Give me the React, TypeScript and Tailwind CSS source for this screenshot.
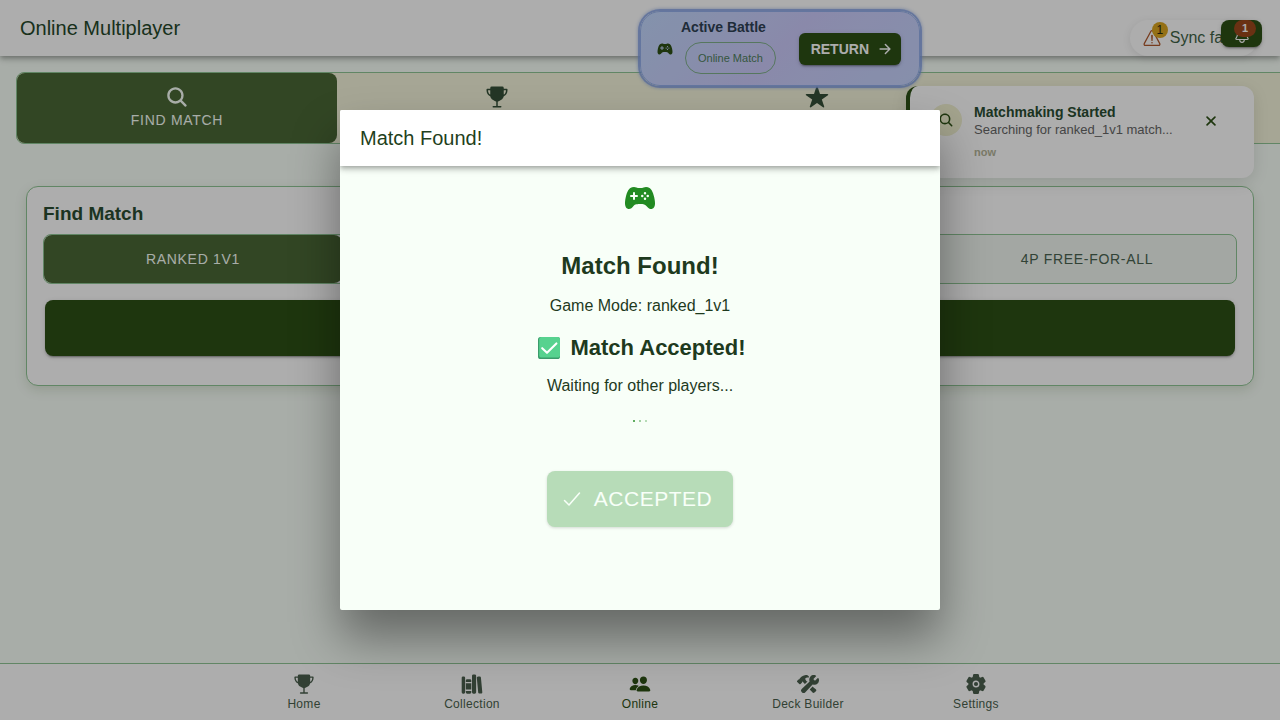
import type { ReactNode } from 'react';
import type { IconType } from 'react-icons';
import {
  IoArrowForward,
  IoCheckmark,
  IoClose,
  IoConstruct,
  IoGameController,
  IoLibrary,
  IoNotificationsOutline,
  IoPeople,
  IoPulse,
  IoSearch,
  IoSettings,
  IoStar,
  IoTrophy,
  IoWarningOutline,
} from 'react-icons/io5';

const TOOLBAR_SHADOW =
  'shadow-[0_2px_4px_-1px_rgba(0,0,0,0.2),0_4px_5px_0_rgba(0,0,0,0.14),0_1px_10px_0_rgba(0,0,0,0.12)]';
const BUTTON_SHADOW =
  'shadow-[0_3px_1px_-2px_rgba(0,0,0,0.2),0_2px_2px_0_rgba(0,0,0,0.14),0_1px_5px_0_rgba(0,0,0,0.12)]';

function Toolbar({ title, children }: { title: ReactNode; children?: ReactNode }) {
  return (
    <header className={`relative z-10 flex h-14 shrink-0 items-center justify-between bg-white px-5 ${TOOLBAR_SHADOW}`}>
      {title}
      {children}
    </header>
  );
}

const sections: { name: string; icon: IconType; caption?: string }[] = [
  { name: 'Find match', icon: IoSearch, caption: 'FIND MATCH' },
  { name: 'Tournaments', icon: IoTrophy },
  { name: 'Leaderboard', icon: IoStar },
  { name: 'Activity', icon: IoPulse },
];

function SectionTabs() {
  return (
    <nav className="ml-4 flex rounded-lg border border-[#90c695] bg-[#f5f5dc]" aria-label="Sections">
      {sections.map(({ name, icon: Icon, caption }, i) => (
        <button
          key={name}
          aria-label={name}
          className={`flex h-[70px] min-w-80 flex-col items-center justify-center gap-px pb-0.5 text-sm leading-5 font-medium tracking-wider ${
            i === 0 ? 'rounded-lg bg-[#4a6736] text-[#f8fff8]' : 'text-[#355038]'
          }`}
        >
          <Icon className="size-6" />
          <span className="h-5">{caption}</span>
        </button>
      ))}
    </nav>
  );
}

const modes = [
  { name: 'Ranked 1v1', caption: 'RANKED 1V1' },
  { name: 'Casual 1v1' },
  { name: 'Team 2v2' },
  { name: '4P Free-for-all', caption: '4P FREE-FOR-ALL' },
];

function FindMatchCard() {
  return (
    <section className="mx-[26px] mt-[42px] rounded-xl border border-[#90c695] bg-white px-4 pt-[15px] pb-[29px] shadow-[0_4px_12px_rgba(45,80,22,0.15)]">
      <h2 className="text-[19px] leading-6 font-bold text-[#2a4d32]">Find Match</h2>
      <div className="mt-2 grid grid-cols-4 rounded-lg border border-[#90c695] bg-[#f0f7f0]">
        {modes.map(({ name, caption }, i) => (
          <button
            key={name}
            aria-label={name}
            className={`h-12 text-sm font-medium tracking-wider ${
              i === 0 ? 'rounded-lg bg-[#4a6736] text-[#f8fff8]' : 'text-[#4a6350]'
            }`}
          >
            {caption}
          </button>
        ))}
      </div>
      <div className="px-0.5 pt-4">
        <button aria-label="Search" className={`block h-14 w-full rounded-lg bg-[#2d5016] ${BUTTON_SHADOW}`} />
      </div>
    </section>
  );
}

const tabs: { label: string; icon: IconType }[] = [
  { label: 'Home', icon: IoTrophy },
  { label: 'Collection', icon: IoLibrary },
  { label: 'Online', icon: IoPeople },
  { label: 'Deck Builder', icon: IoConstruct },
  { label: 'Settings', icon: IoSettings },
];

function TabBar() {
  return (
    <nav className="flex h-[57px] shrink-0 justify-center border-t border-[#90c695] bg-white" aria-label="Main">
      {tabs.map(({ label, icon: Icon }) => (
        <a
          key={label}
          href="#"
          className={`flex w-[168px] flex-col items-center justify-center gap-px text-xs leading-4 tracking-wide ${
            label === 'Online' ? 'text-[#2d5016]' : 'text-[#4a5f4d]'
          }`}
        >
          <Icon className="size-[22px]" />
          {label}
        </a>
      ))}
    </nav>
  );
}

function HeaderStatus() {
  return (
    <div className="absolute top-5 right-[18px] pr-1">
      <div className="flex h-9 items-center gap-2 rounded-full bg-white pr-2.5 pl-3 text-base text-[#3f6347] shadow-[0_2px_8px_rgba(0,0,0,0.1)]">
        <span className="relative">
          <IoWarningOutline className="size-5 text-[#b0592d]" />
          <span className="absolute -top-1.5 left-2.5 flex size-4 items-center justify-center rounded-full bg-[#daa520] text-xs text-[#2a2a10]">
            1
          </span>
        </span>
        Sync failed
      </div>
      <button
        aria-label="Notifications"
        className={`absolute top-0 right-0 flex h-[27px] w-[41px] items-center justify-center rounded-lg bg-[#2d5016] pt-0.5 text-white ${BUTTON_SHADOW}`}
      >
        <IoNotificationsOutline className="size-[18px]" />
        <span className="absolute top-0 left-[13px] flex h-[17px] w-[22px] items-center justify-center rounded-full bg-[#9c491d] text-[11px] font-bold text-white">
          1
        </span>
      </button>
    </div>
  );
}

function ActiveBattle() {
  return (
    <aside className="absolute top-[11px] left-1/2 z-20 flex h-[75px] w-[280px] items-center rounded-[20px] border border-[#94afea] bg-linear-135 from-[#c2d8fe] via-[#cccbfb] to-[#c6d4fd] pr-[18px] pl-4 shadow-[0_0_0_2px_rgba(125,155,225,0.7),0_0_3px_3px_rgba(125,155,225,0.4)]">
      <IoGameController className="size-4 text-[#2d5016]" />
      <div className="ml-2 flex flex-1 flex-col items-start pb-1.5">
        <strong className="text-sm leading-5 text-[#2f4155]">Active Battle</strong>
        <span className="mt-[5px] ml-1 flex h-8 items-center rounded-full border border-[#7fb08b] px-3 text-[11px] text-[#4f805c]">
          Online Match
        </span>
      </div>
      <button
        className={`flex h-8 items-center gap-2 rounded-md bg-[#2d5016] pr-2 pl-3 text-sm font-bold text-white ${BUTTON_SHADOW}`}
      >
        RETURN
        <IoArrowForward className="size-4" />
      </button>
    </aside>
  );
}

function Toast() {
  return (
    <div
      role="status"
      className="absolute top-[86px] right-[26px] z-20 flex h-[92px] w-[348px] items-start rounded-xl border-l-4 border-[#2d5016] bg-white pt-4 pr-[34px] pl-5 shadow-[0_4px_16px_rgba(0,0,0,0.12)]"
    >
      <span className="mt-0.5 flex size-8 items-center justify-center rounded-full bg-[#f0f0d0] text-[#2d5016]">
        <IoSearch className="size-4" />
      </span>
      <div className="ml-3 flex-1">
        <h3 className="text-sm leading-5 font-bold text-[#2a4d32]">Matchmaking Started</h3>
        <p className="text-[13px] leading-4 text-[#666666]">Searching for ranked_1v1 match...</p>
        <p className="mt-2 text-[11px] leading-3 font-bold text-[#b4b498]">now</p>
      </div>
      <button aria-label="Dismiss" className="mt-2.5 text-[#2d5016]">
        <IoClose className="size-[18px]" />
      </button>
    </div>
  );
}

function AcceptedMark() {
  return (
    <svg className="size-[22px]" viewBox="0 0 22 22" fill="none" aria-hidden="true">
      <rect width="22" height="22" rx="2.6" fill="#3b9c6b" />
      <rect x="1.2" width="20.8" height="20.6" rx="2.2" fill="#57d28f" />
      <path d="M4.2 11.2 9 15.8 18.4 6.4" stroke="#fff" strokeWidth="2.1" strokeLinecap="round" strokeLinejoin="round" />
    </svg>
  );
}

function MatchFoundDialog() {
  return (
    <div className="absolute inset-0 z-30 flex items-center justify-center bg-black/32">
      <div
        role="dialog"
        aria-label="Match Found!"
        className="flex h-[500px] w-[600px] flex-col overflow-hidden rounded-xs bg-[#f8fff8] shadow-[0_28px_48px_rgba(0,0,0,0.4)]"
      >
        <Toolbar title={<h2 className="text-xl font-medium text-[#1f3f20]">Match Found!</h2>} />
        <div className="flex flex-col items-center pt-4 text-[#1e3a1e]">
          <IoGameController className="size-8 text-[#228b22]" />
          <h1 className="mt-9 text-2xl leading-8 font-bold">Match Found!</h1>
          <p className="mt-3 text-base leading-6">Game Mode: ranked_1v1</p>
          <h2 className="mt-4 flex items-center gap-2.5 pl-1 text-[22px] leading-7 font-bold">
            <AcceptedMark />
            Match Accepted!
          </h2>
          <p className="mt-3 text-base leading-6">Waiting for other players...</p>
          <div className="mt-[22px] flex gap-1 text-[#228b22]">
            <span className="size-0.5 bg-current opacity-70" />
            <span className="size-0.5 bg-current opacity-40" />
            <span className="size-0.5 bg-current opacity-30" />
          </div>
          <button
            disabled
            className="mt-[49px] flex h-14 items-center gap-2.5 rounded-lg bg-[#b7dcb8] pr-[21px] pl-[13px] text-[21px] font-medium tracking-wide text-[#f8fff8] shadow-[0_1px_3px_rgba(0,0,0,0.15)]"
          >
            <IoCheckmark className="size-6" />
            ACCEPTED
          </button>
        </div>
      </div>
    </div>
  );
}

export default function App() {
  return (
    <div className="relative flex h-screen flex-col overflow-hidden bg-[#f8fff8] font-['Liberation_Sans',Arial,sans-serif]">
      <Toolbar title={<h1 className="text-xl font-medium text-[#25482a]">Online Multiplayer</h1>}>
        <HeaderStatus />
      </Toolbar>
      <main className="flex-1 overflow-hidden pt-4">
        <div className="w-max">
          <SectionTabs />
        </div>
        <FindMatchCard />
      </main>
      <TabBar />
      <ActiveBattle />
      <Toast />
      <MatchFoundDialog />
    </div>
  );
}
